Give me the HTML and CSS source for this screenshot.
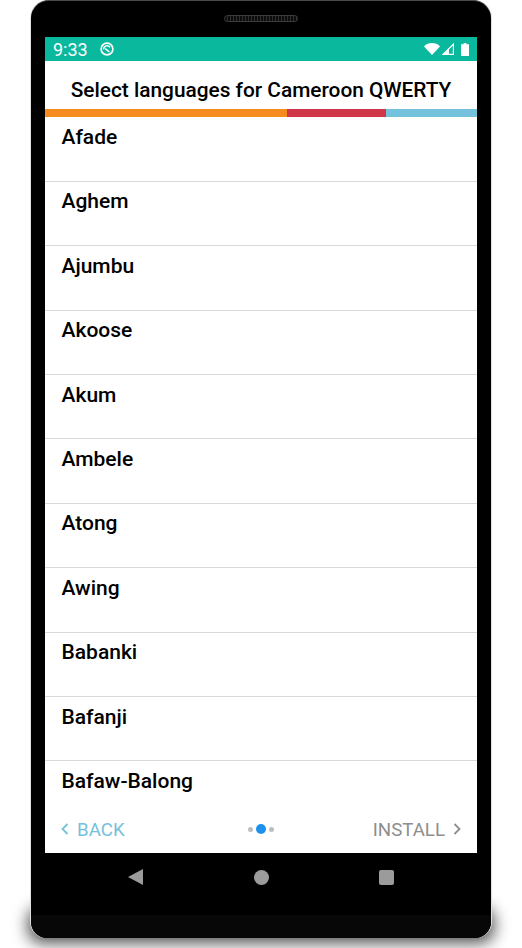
FILE: index.html
```html
<!DOCTYPE html>
<html lang="en">
<head>
<meta charset="UTF-8">
<meta name="viewport" content="width=device-width, initial-scale=1.0">
<title>Select languages</title>
<link rel="stylesheet" href="styles.css">
</head>
<body>

<div class="phone">
    <div class="top-bezel">
        <div class="speaker"></div>
    </div>

    <div class="screen">
        <div class="status-bar">
            <span class="time">9:33</span>
            <svg class="sync-icon" width="14" height="14" viewBox="0 0 14 14">
                <circle cx="7" cy="7" r="5.9" fill="none" stroke="#fff" stroke-width="1.7"/>
                <path d="M3.7 7.4 A3.4 3.4 0 0 1 10 5.4" fill="none" stroke="#fff" stroke-width="1.4"/>
                <path d="M5.2 6.6 L9.4 10" fill="none" stroke="#fff" stroke-width="1.6"/>
            </svg>
            <span class="status-icons">
                <svg class="wifi-icon" width="16" height="12" viewBox="0 0 16 12">
                    <path d="M0 3.4 C4.4 -1 11.6 -1 16 3.4 L8 12 Z" fill="#fff"/>
                </svg>
                <svg class="signal-icon" width="12" height="12" viewBox="0 0 12 12">
                    <path d="M11.4 1.2 V11.4 H0.9 Z" fill="none" stroke="#fff" stroke-width="1.2"/>
                    <path d="M7 5.6 V11 H2 Z" fill="#fff"/>
                </svg>
                <svg width="8" height="13" viewBox="0 0 8 13">
                    <path d="M2.6 0 H5.4 V1.2 H8 V13 H0 V1.2 H2.6 Z" fill="#fff"/>
                </svg>
            </span>
        </div>

        <h1 class="title">Select languages for Cameroon QWERTY</h1>

        <div class="stripe">
            <div class="stripe-orange"></div>
            <div class="stripe-red"></div>
            <div class="stripe-blue"></div>
        </div>

        <ul class="language-list">
            <li>Afade</li>
            <li>Aghem</li>
            <li>Ajumbu</li>
            <li>Akoose</li>
            <li>Akum</li>
            <li>Ambele</li>
            <li>Atong</li>
            <li>Awing</li>
            <li>Babanki</li>
            <li>Bafanji</li>
            <li>Bafaw-Balong</li>
        </ul>

        <div class="footer-nav">
            <a class="back-link">
                <svg width="8" height="12" viewBox="0 0 8 12"><path d="M6.5 1 L1.5 6 L6.5 11" fill="none" stroke="currentColor" stroke-width="1.8"/></svg>
                <span class="nav-label">BACK</span>
            </a>
            <div class="pager">
                <span class="dot"></span>
                <span class="dot active"></span>
                <span class="dot"></span>
            </div>
            <a class="install-link">
                <span class="nav-label">INSTALL</span>
                <svg width="8" height="12" viewBox="0 0 8 12"><path d="M1.5 1 L6.5 6 L1.5 11" fill="none" stroke="currentColor" stroke-width="1.8"/></svg>
            </a>
        </div>
    </div>

    <div class="softkeys">
        <svg width="15" height="16" viewBox="0 0 15 16"><path d="M15 0 V16 L0 8 Z" fill="#9b9b9b"/></svg>
        <span class="home-key"></span>
        <span class="recent-key"></span>
    </div>

    <div class="chin"></div>
</div>

</body>
</html>
```

FILE: styles.css
```css
html, body {
    margin: 0;
    height: 948px;
    overflow: hidden;
}

html {
    background-color: white;
}

body {
    font-family: Roboto, "Liberation Sans", sans-serif;
    color: black;
}

.phone {
    position: relative;
    width: 460px;
    height: 938px;
    margin-left: 31px;
    box-sizing: border-box;
    background-color: black;
    border-radius: 18px 18px 16px 16px;
    border-top: 1px solid #4a4a4a;
    box-shadow: -1px 0 0 #e0e0e0, 1px 0 0 #e0e0e0;
}

/* soft shadow under the bottom of the phone */
.phone::before {
    content: "";
    position: absolute;
    left: -3px;
    right: -3px;
    bottom: -5px;
    height: 36px;
    background-color: rgba(0, 0, 0, 0.7);
    border-radius: 14px;
    filter: blur(8px);
    z-index: -1;
}

.top-bezel {
    height: 36px;
    display: flex;
    justify-content: center;
    padding-top: 14px;
    box-sizing: border-box;
}

.speaker {
    width: 74px;
    height: 7px;
    box-sizing: border-box;
    background: repeating-linear-gradient(90deg, #0c0c0c 0, #0c0c0c 2px, #2e2e2e 2px, #2e2e2e 3px);
    border: 1px solid #3c3c3c;
    border-radius: 4px;
}

.screen {
    width: 432px;
    height: 816px;
    margin-left: 14px;
    display: flex;
    flex-direction: column;
    background-color: white;
}

.status-bar {
    height: 24px;
    flex: none;
    display: flex;
    align-items: center;
    padding: 0 8px;
    background-color: #0ab89e;
    color: white;
}

.time {
    font-size: 18px;
    width: 47px;
}

.status-icons {
    margin-left: auto;
    display: flex;
    align-items: center;
}

.wifi-icon {
    margin-right: 2px;
}

.signal-icon {
    margin-right: 7px;
}

.title {
    height: 48px;
    flex: none;
    margin: 0;
    font-size: 20.85px;
    font-weight: 500;
    line-height: 58px;
    text-align: center;
    white-space: nowrap;
    color: black;
}

.stripe {
    height: 8px;
    flex: none;
    display: flex;
}

.stripe-orange { width: 242px; background-color: #f68b1f; }
.stripe-red { width: 99px; background-color: #cf3647; }
.stripe-blue { flex: 1; background-color: #75c2dc; }

.language-list {
    flex: 1;
    min-height: 0;
    margin: 0;
    padding: 0.4px 0 0;
    list-style: none;
    overflow: hidden;
}

.language-list li {
    height: 64.4px;
    box-sizing: border-box;
    padding: 6.6px 16px 0 16.5px;
    font-size: 21px;
    font-weight: 500;
    line-height: 26px;
    border-bottom: 1px solid #d9d9d9;
}

.language-list li:last-child {
    border-bottom: none;
}

.footer-nav {
    height: 48px;
    flex: none;
    display: flex;
    align-items: center;
    padding: 0 16px;
    font-size: 18.7px;
}

.back-link, .install-link {
    flex: 1;
    display: flex;
    align-items: center;
    gap: 8px;
}

.back-link { color: #75c2dc; }

.install-link {
    justify-content: flex-end;
    color: #8e8e8e;
}

.nav-label {
    padding-top: 2px;
}

.pager {
    display: flex;
    align-items: center;
    gap: 3px;
}

.dot {
    width: 5px;
    height: 5px;
    border-radius: 50%;
    background-color: #bdbdbd;
}

.dot.active {
    width: 10px;
    height: 10px;
    background-color: #1e90ee;
}

.softkeys {
    height: 48px;
    margin: 0 0 14px 97px;
    width: 266px;
    display: flex;
    align-items: center;
    justify-content: space-between;
}

.home-key {
    width: 15px;
    height: 15px;
    border-radius: 50%;
    background-color: #9b9b9b;
}

.recent-key {
    width: 15px;
    height: 15px;
    border-radius: 2px;
    background-color: #9b9b9b;
}

.chin {
    height: 23px;
    background-color: #070707;
    border-radius: 0 0 16px 16px;
}
```
